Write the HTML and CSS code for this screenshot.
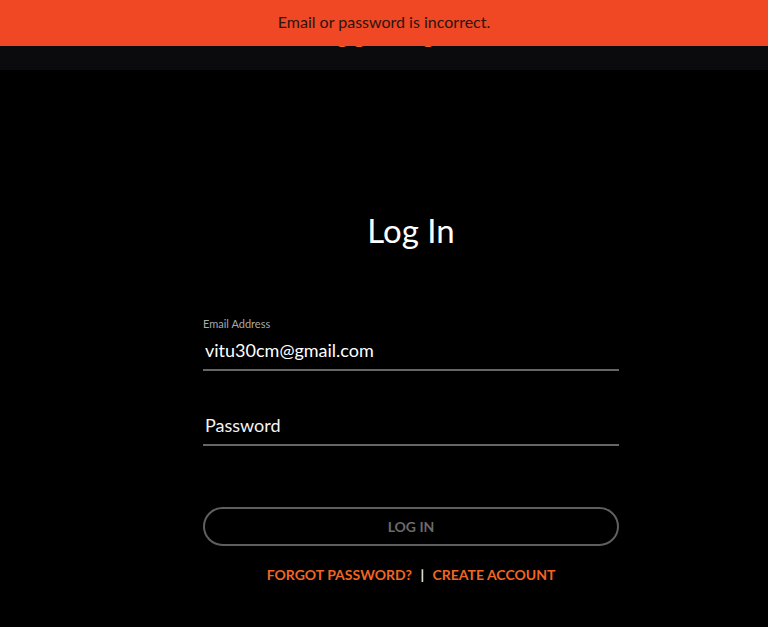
FILE: index.html
```html
<!DOCTYPE html>
<html lang="en">
<head>
    <meta charset="UTF-8">
    <title>Log In</title>
    <link rel="stylesheet" href="styles.css">
</head>
<body>
    <div class="toast">Email or password is incorrect.</div>

    <header class="top-bar">
        <span class="brand">gigs@stage</span>
    </header>

    <main class="page">
        <div class="login-box">
            <h1>Log In</h1>
            <form class="login-form" onsubmit="return false">
                <div class="field">
                    <label for="email">Email Address</label>
                    <input type="email" id="email" value="vitu30cm@gmail.com">
                </div>
                <div class="field">
                    <input type="password" id="password" placeholder="Password">
                </div>
                <button type="submit" class="login-btn">LOG IN</button>
            </form>
            <div class="links">
                <a href="#">FORGOT PASSWORD?</a>
                <span class="sep">|</span>
                <a href="#">CREATE ACCOUNT</a>
            </div>
        </div>
    </main>
</body>
</html>
```

FILE: styles.css
```css
body {
    margin: 0;
    background: #000;
    font-family: Lato, "Open Sans", sans-serif;
    color: #fff;
}

/* error toast pinned over the header */
.toast {
    position: fixed;
    top: 0;
    left: 0;
    right: 0;
    height: 46px;
    line-height: 44px;
    background: #f04724;
    color: #2b1510;
    font-size: 16px;
    text-align: center;
    z-index: 10;
}

.top-bar {
    height: 70px;
    background: #0b0b0d;
    display: flex;
    justify-content: center;
    align-items: flex-start;
    padding-left: 14px;
}

.brand {
    color: #f26522;
    font-size: 22px;
    font-weight: bold;
    line-height: 22px;
    margin-top: 24px;
}

.page {
    padding-left: 54px;
    display: flex;
    justify-content: center;
}

.login-box {
    width: 416px;
}

h1 {
    margin: 140px 0 0;
    text-align: center;
    font-size: 33px;
    font-weight: normal;
    line-height: 40px;
}

.login-form {
    margin-top: 67px;
}

.field + .field {
    margin-top: 35px;
}

.field label {
    display: block;
    font-size: 11px;
    color: #a9a9a9;
    line-height: 14px;
}

.field input {
    display: block;
    width: 100%;
    box-sizing: border-box;
    background: transparent;
    border: none;
    border-bottom: 2px solid #666;
    color: #fff;
    font-family: inherit;
    font-size: 18px;
    line-height: 22px;
    padding: 8px 2px 8px;
    outline: none;
}

.field input::placeholder {
    color: #f4f4f4;
}

.login-btn {
    display: block;
    width: 100%;
    height: 39px;
    margin-top: 61px;
    background: transparent;
    border: 2px solid #5f5f5f;
    border-radius: 20px;
    color: #6a6a6a;
    font-family: inherit;
    font-size: 14px;
    font-weight: bold;
    cursor: pointer;
}

.links {
    margin-top: 20px;
    text-align: center;
    font-size: 14px;
    font-weight: bold;
}

.links a {
    color: #f26522;
    text-decoration: none;
}

.sep {
    color: #e8ecff;
    margin: 0 5px;
}
```
